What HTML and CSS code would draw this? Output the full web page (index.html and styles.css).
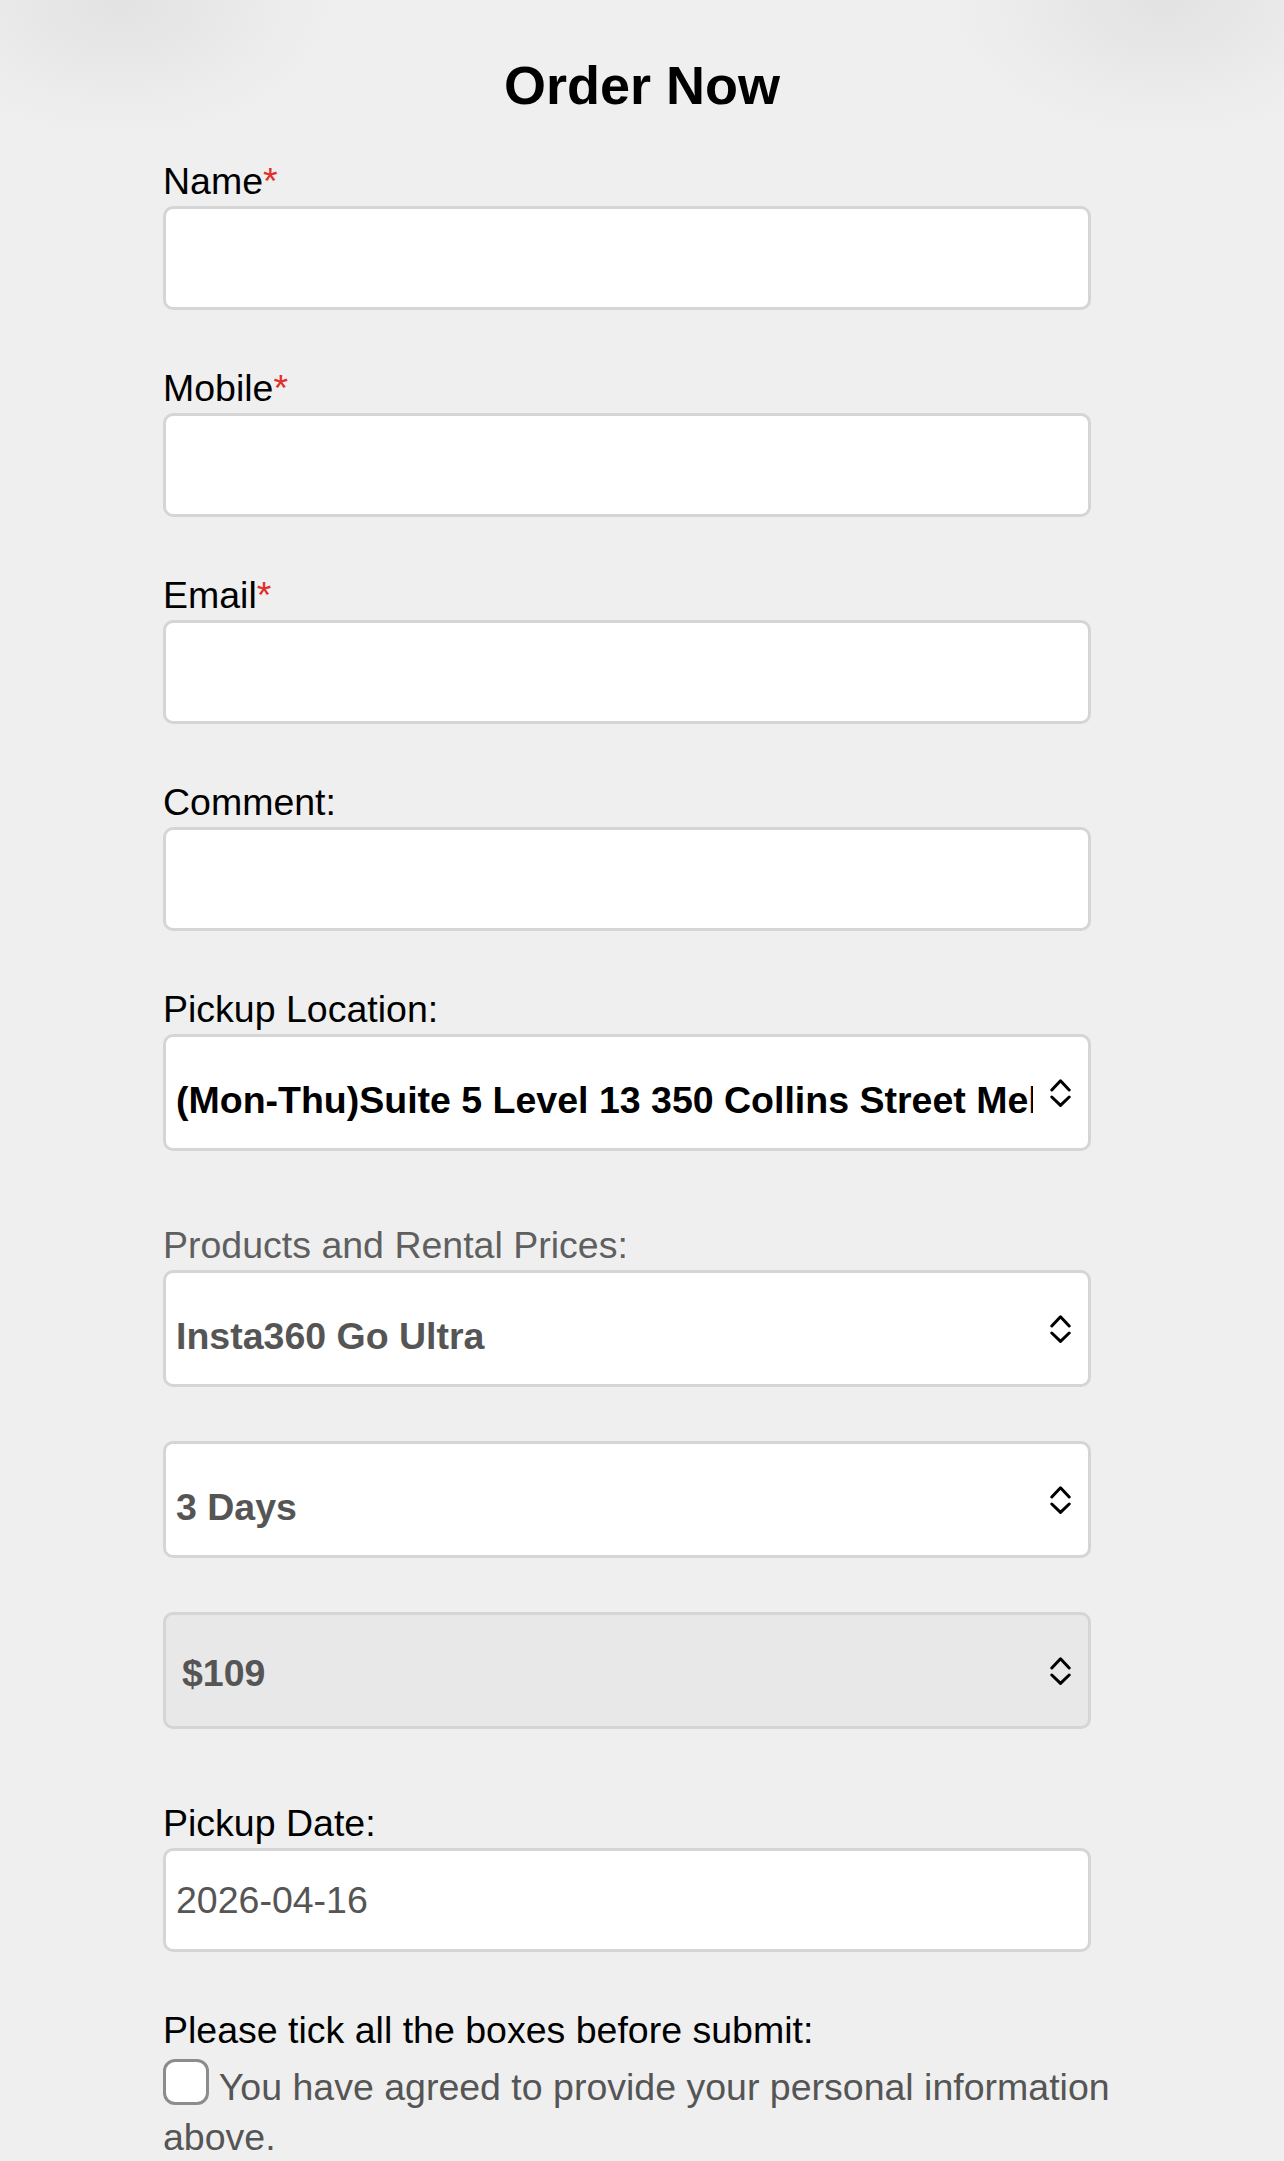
FILE: index.html
```html
<!DOCTYPE html>
<html lang="en">
<head>
    <meta charset="UTF-8">
    <meta name="viewport" content="width=device-width, initial-scale=1.0">
    <title>Order Now</title>
    <link rel="stylesheet" href="styles.css">
</head>
<body>
    <h1 class="title">Order Now</h1>

    <form class="order-form">
        <div class="field">
            <label for="name">Name<span class="req">*</span></label>
            <input type="text" id="name" class="text-input">
        </div>

        <div class="field">
            <label for="mobile">Mobile<span class="req">*</span></label>
            <input type="tel" id="mobile" class="text-input">
        </div>

        <div class="field">
            <label for="email">Email<span class="req">*</span></label>
            <input type="email" id="email" class="text-input">
        </div>

        <div class="field">
            <label for="comment">Comment:</label>
            <input type="text" id="comment" class="text-input">
        </div>

        <div class="field field-select">
            <label for="location">Pickup Location:</label>
            <div class="select-wrap">
                <select id="location" class="select-input dark">
                    <option>(Mon-Thu)Suite 5 Level 13 350 Collins Street Melbourne VIC 3000</option>
                </select>
                <svg class="chevrons" width="21" height="28" viewBox="0 0 21 28"><polyline points="1.8,11 10.5,1.8 19.2,11"/><polyline points="1.8,18 10.5,26.4 19.2,18"/></svg>
            </div>
        </div>

        <div class="field field-select">
            <label for="product" class="muted">Products and Rental Prices:</label>
            <div class="select-stack">
                <div class="select-wrap">
                    <select id="product" class="select-input">
                        <option>Insta360 Go Ultra</option>
                    </select>
                    <svg class="chevrons" width="21" height="28" viewBox="0 0 21 28"><polyline points="1.8,11 10.5,1.8 19.2,11"/><polyline points="1.8,18 10.5,26.4 19.2,18"/></svg>
                </div>
                <div class="select-wrap">
                    <select class="select-input">
                        <option>3 Days</option>
                        <option>5 Days</option>
                        <option>7 Days</option>
                    </select>
                    <svg class="chevrons" width="21" height="28" viewBox="0 0 21 28"><polyline points="1.8,11 10.5,1.8 19.2,11"/><polyline points="1.8,18 10.5,26.4 19.2,18"/></svg>
                </div>
                <div class="select-wrap">
                    <select class="select-input locked">
                        <option>$109</option>
                    </select>
                    <svg class="chevrons" width="21" height="28" viewBox="0 0 21 28"><polyline points="1.8,11 10.5,1.8 19.2,11"/><polyline points="1.8,18 10.5,26.4 19.2,18"/></svg>
                </div>
            </div>
        </div>

        <div class="field">
            <label for="pickup-date">Pickup Date:</label>
            <input type="text" id="pickup-date" class="text-input date" value="2026-04-16">
        </div>

        <div class="agree">
            <p class="agree-title">Please tick all the boxes before submit:</p>
            <label class="agree-item"><input type="checkbox" class="tick"> You have agreed to provide your personal information above.</label>
        </div>
    </form>
</body>
</html>
```

FILE: styles.css
```css
body {
    margin: 0;
    min-height: 2161px;
    font-family: "Liberation Sans", Arial, Helvetica, sans-serif;
    color: #000;
    background:
        radial-gradient(ellipse 210px 135px at 120px 0, #e2e2e2 0%, #e8e8e8 45%, rgba(239, 239, 239, 0) 100%),
        radial-gradient(ellipse 210px 135px at 1164px 0, #e2e2e2 0%, #e8e8e8 45%, rgba(239, 239, 239, 0) 100%),
        #efefef;
}
.title {
    margin: 53px 0 42px;
    font-size: 54px;
    line-height: 65px;
    font-weight: bold;
    text-align: center;
}
.order-form {
    width: 958px;
    margin: 0 auto;
}
.field {
    margin-bottom: 57px;
}
.field-select {
    margin-bottom: 73px;
}
.field label,
.agree-title {
    display: block;
    margin: 0 0 4px;
    font-size: 37.5px;
    line-height: 42px;
}
.field label.muted {
    color: #5f5f5f;
}
.req {
    color: #e0302b;
}
.text-input {
    display: block;
    box-sizing: border-box;
    width: 928px;
    height: 104px;
    margin: 0;
    padding: 0 10px;
    border: 3px solid #d5d5d5;
    border-radius: 10px;
    background: #fff;
    font-family: inherit;
    font-size: 37.5px;
    color: #555;
    outline: none;
}
.select-stack {
    display: flex;
    flex-direction: column;
    gap: 54px;
}
.select-wrap {
    position: relative;
    width: 928px;
}
.select-input {
    display: block;
    box-sizing: border-box;
    width: 100%;
    height: 117px;
    margin: 0;
    padding: 14px 55px 0 10px;
    border: 3px solid #d5d5d5;
    border-radius: 10px;
    background: #fff;
    font-family: inherit;
    font-size: 37.5px;
    font-weight: bold;
    color: #555;
    -webkit-appearance: none;
    appearance: none;
    outline: none;
}
.select-input.dark {
    color: #000;
}
.select-input.locked {
    padding-top: 4px;
    padding-left: 16px;
    background: #e8e8e8;
}
/* up/down arrows drawn over the right end of each select */
.chevrons {
    position: absolute;
    right: 20px;
    top: 50%;
    margin-top: -14px;
    pointer-events: none;
    fill: none;
    stroke: #000;
    stroke-width: 3;
    stroke-linecap: round;
    stroke-linejoin: round;
}
.agree {
    font-size: 37.5px;
}
.agree-title {
    margin-bottom: 0;
}
.agree-item {
    display: block;
    margin-top: 8px;
    line-height: 50px;
    color: #555;
}
.tick {
    -webkit-appearance: none;
    appearance: none;
    box-sizing: border-box;
    width: 46px;
    height: 46px;
    margin: 0;
    border: 3px solid #8c8c8c;
    border-radius: 12px;
    background: #fff;
    vertical-align: -5px;
}
```
